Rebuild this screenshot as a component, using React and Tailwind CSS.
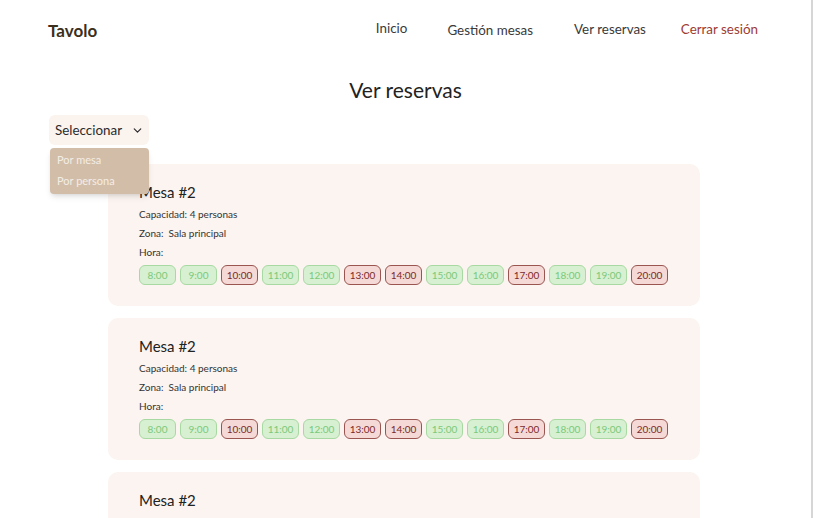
// App.jsx — Tavolo: vista "Ver reservas" con tarjetas de mesa y horas.
import { ChevronDown } from 'lucide-react'

const HORAS = [
  ['8:00', true], ['9:00', true], ['10:00', false], ['11:00', true], ['12:00', true],
  ['13:00', false], ['14:00', false], ['15:00', true], ['16:00', true], ['17:00', false],
  ['18:00', true], ['19:00', true], ['20:00', false],
]

const MESAS = [1, 2, 3]

export default function App() {
  return (
    <div className="w-[813px] h-[518px] overflow-hidden bg-white flex" style={{ fontFamily: 'Lato, "Noto Sans", sans-serif' }}>
      <div className="w-[811px] shrink-0 relative">
        {/* Cabecera */}
        <header className="flex items-center justify-between pl-12 pr-[53px] h-[58px]">
          <span className="text-[17px] font-bold text-[#3b2f1e] mt-[4px]">Tavolo</span>
          <nav className="flex items-center text-[13.4px] text-[#3a3a3a]">
            <a className="mr-10 -mt-[2px]">Inicio</a>
            <a className="mr-[41px] mt-[2px]">Gestión mesas</a>
            <a className="mr-[35px]">Ver reservas</a>
            <a className="text-[#9e3b31]">Cerrar sesión</a>
          </nav>
        </header>

        <h1 className="text-center text-[21px] text-[#222] mt-[18px] leading-[28px]">Ver reservas</h1>

        {/* Selector */}
        <div className="relative ml-[49px] mt-[11px] w-[100px]">
          <div className="h-[30px] rounded-md bg-[#fbf3ee] flex items-center pl-[6px] gap-[9px] text-[13.4px] text-[#2b2b2b]">
            Seleccionar
            <ChevronDown size={13} strokeWidth={2.2} />
          </div>
          <div className="absolute left-[1px] top-[33px] w-[99px] bg-[#d2bda8] rounded-sm shadow-md z-10 py-[2px] text-[11px] text-[#f4ede6]">
            <div className="px-[7px] h-[20px] flex items-center">Por mesa</div>
            <div className="px-[7px] h-[22px] flex items-center">Por persona</div>
          </div>
        </div>

        {/* Tarjetas */}
        <div className="flex flex-col items-start pl-[108px] gap-3 mt-[19px]">
          {MESAS.map(m => (
            <div key={m} className="w-[592px] rounded-[10px] bg-[#fbf4f0] pl-[31px] pr-4 pt-[18px] pb-[21px] shrink-0">
              <p className="text-[15px] leading-[20px] text-[#222]">Mesa #2</p>
              <div className="mt-[3px] text-[10px] text-[#333] leading-[19px]">
                <p>Capacidad: 4 personas</p>
                <p>Zona:&nbsp; Sala principal</p>
                <p>Hora:</p>
              </div>
              <div className="flex gap-1 mt-[3px]">
                {HORAS.map(([h, libre]) => (
                  <span
                    key={h}
                    className={
                      libre
                        ? 'w-[37px] h-[20px] rounded-md border border-[#a9d9a3] bg-[#d6f0d1] text-[#7cc97a] text-[10px] flex items-center justify-center'
                        : 'w-[37px] h-[20px] rounded-md border border-[#9a5550] bg-[#f5d9d6] text-[#7a2a2a] text-[10px] flex items-center justify-center'
                    }
                  >
                    {h}
                  </span>
                ))}
              </div>
            </div>
          ))}
        </div>
      </div>
      <div className="w-[2px] bg-[#d6d6d6] shrink-0" />
    </div>
  )
}
